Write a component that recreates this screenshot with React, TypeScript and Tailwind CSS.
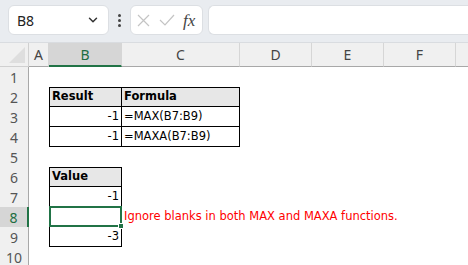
import { ChevronDown } from 'lucide-react';

const cols = ['A', 'B', 'C', 'D', 'E', 'F'];
const rows = [1, 2, 3, 4, 5, 6, 7, 8, 9, 10];

function Cell({ className = '', children }: { className?: string; children?: React.ReactNode }) {
  return <div className={`h-5 flex items-center overflow-visible whitespace-nowrap ${className}`}>{children}</div>;
}

export default function App() {
  return (
    <div className="w-[468px] h-[265px] overflow-hidden bg-white font-['Noto_Sans',sans-serif]">
      {/* formula bar */}
      <div className="h-[43px] bg-[#e9ecf0] flex items-start pt-[5px] pl-2 gap-0 border-b border-[#d9dce0]">
        <div className="w-[101px] h-[30px] bg-white rounded-md border border-[#dcdfe3] flex items-center justify-between pl-2 pr-2">
          <span className="text-[14px] text-[#222]">B8</span>
          <ChevronDown className="w-3.5 h-3.5 text-[#333]" strokeWidth={2.5} />
        </div>
        <div className="w-[21px] h-[30px] flex flex-col items-center justify-center gap-[2px]">
          <span className="w-[3px] h-[3px] rounded-full bg-[#444]" />
          <span className="w-[3px] h-[3px] rounded-full bg-[#444]" />
          <span className="w-[3px] h-[3px] rounded-full bg-[#444]" />
        </div>
        <div className="w-[73px] h-[30px] bg-white rounded-md border border-[#dcdfe3] flex items-center pl-[6px] gap-[9px]">
          <svg width="13" height="13" viewBox="0 0 13 13" className="text-[#c4c4c4]">
            <path d="M1 1 L12 12 M12 1 L1 12" stroke="currentColor" strokeWidth="1.2" fill="none" />
          </svg>
          <svg width="16" height="12" viewBox="0 0 16 12" className="text-[#c4c4c4]">
            <path d="M1 6 L6 11 L15 1" stroke="currentColor" strokeWidth="1.2" fill="none" />
          </svg>
          <span className="font-['Liberation_Serif',serif] italic text-[17px] text-[#444] leading-none -ml-[1px]">fx</span>
        </div>
        <div className="ml-[5px] flex-1 h-[30px] bg-white rounded-l-md border border-r-0 border-[#dcdfe3]" />
      </div>

      {/* sheet */}
      <div className="grid grid-cols-[29px_20px_73px_118px_72px_72px_72px_1fr] grid-rows-[24px_repeat(10,20px)] text-[11.5px] font-['DejaVu_Sans',sans-serif] text-black">
        {/* header row */}
        <div className="bg-[#f0f0f0] border-b border-[#a8a8a8] border-r border-[#d0d0d0] relative overflow-hidden">
          <div className="absolute right-[3px] bottom-[3px] w-0 h-0 border-l-[16px] border-l-transparent border-b-[16px] border-b-[#dedede]" />
        </div>
        {cols.map((c) => (
          <div
            key={c}
            className={`flex items-center justify-center text-[14px] font-['Noto_Sans',sans-serif] border-r border-[#d6d6d6] ${
              c === 'B'
                ? 'bg-[#d6d6d6] text-[#1e6e42] border-b-2 border-b-[#217346]'
                : 'bg-[#f0f0f0] text-[#444] border-b border-b-[#a8a8a8]'
            }`}
          >
            {c}
          </div>
        ))}
        <div className="bg-[#f0f0f0] border-b border-[#a8a8a8]" />

        {rows.map((r) => (
          <RowCells key={r} r={r} />
        ))}
      </div>
    </div>
  );
}

function RowCells({ r }: { r: number }) {
  const head = (
    <div
      className={`flex items-center justify-center text-[14px] font-['Noto_Sans',sans-serif] ${
        r === 8
          ? 'bg-[#d6d6d6] text-[#1e6e42] border-r-2 border-[#217346]'
          : 'bg-[#f0f0f0] text-[#555] border-r border-[#a8a8a8]'
      }`}
    >
      {r}
    </div>
  );

  let b: React.ReactNode = <Cell />;
  let c: React.ReactNode = <Cell />;

  if (r === 2) {
    b = <Cell className="bg-[#e7e7e7] border border-black font-bold pl-[2px]">Result</Cell>;
    c = <Cell className="bg-[#e7e7e7] border-y border-r border-black font-bold pl-[2px]">Formula</Cell>;
  } else if (r === 3 || r === 4) {
    b = <Cell className="border-x border-b border-black justify-end pr-[2px]">-1</Cell>;
    c = (
      <Cell className="border-r border-b border-black pl-[2px]">{r === 3 ? '=MAX(B7:B9)' : '=MAXA(B7:B9)'}</Cell>
    );
  } else if (r === 6) {
    b = <Cell className="bg-[#e7e7e7] border border-black font-bold pl-[2px]">Value</Cell>;
  } else if (r === 7) {
    b = <Cell className="border-x border-b border-black justify-end pr-[2px]">-1</Cell>;
  } else if (r === 8) {
    b = (
      <Cell className="relative border-2 border-[#217346] -mt-[1px] h-[21px]">
        <span className="absolute -right-[4px] -bottom-[4px] w-[6px] h-[6px] bg-[#217346] border border-white" />
      </Cell>
    );
    c = <Cell className="text-[#ff0000] pl-[2px]">Ignore blanks in both MAX and MAXA functions.</Cell>;
  } else if (r === 9) {
    b = <Cell className="border-x border-b border-black justify-end pr-[2px]">-3</Cell>;
  }

  return (
    <>
      {head}
      <Cell />
      {b}
      {c}
      <Cell />
      <Cell />
      <Cell />
      <Cell />
    </>
  );
}
